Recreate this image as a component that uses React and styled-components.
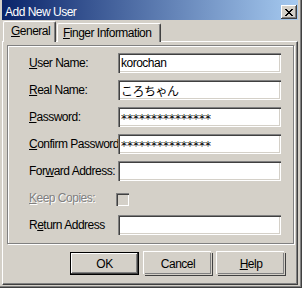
import React from 'react';
import styled, { createGlobalStyle } from 'styled-components';

// "Add New User" dialog, classic Windows look

const GlobalStyle = createGlobalStyle`
  html, body {
    margin: 0;
    padding: 0;
    background: #d4d0c8;
  }
  * {
    box-sizing: border-box;
  }
`;

const Window = styled.div`
  width: 302px;
  height: 288px;
  display: flex;
  flex-direction: column;
  padding: 0 4px 3px 2px;
  background: #d4d0c8;
  box-shadow: inset -1px -1px 0 #404040, inset -2px -2px 0 #808080;
  font-family: "Liberation Sans", Arial, "Noto Sans CJK JP", sans-serif;
  font-size: 12px;
  letter-spacing: -0.5px;
  color: #000;
`;

const TitleBar = styled.div`
  height: 20px;
  display: flex;
  align-items: center;
  justify-content: space-between;
  padding: 0 1px 0 3px;
  background: linear-gradient(to right, #0a246a, #a6caf0);
  color: #fff;
`;

const TitleText = styled.span`
  margin-top: 4px;
`;

const CloseButton = styled.div`
  width: 16px;
  height: 14px;
  align-self: flex-end;
  margin-bottom: 1px;
  display: flex;
  align-items: center;
  justify-content: center;
  background: #d4d0c8;
  box-shadow: inset -1px -1px 0 #404040, inset 1px 1px 0 #fff, inset -2px -2px 0 #808080;
`;

const TabStrip = styled.div`
  height: 21px;
  margin: 1px 0 -1px;
  padding-left: 1px;
  display: flex;
  align-items: flex-end;
`;

const Tab = styled.div`
  position: relative;
  z-index: ${p => (p.$active ? 1 : 0)};
  width: ${p => p.$width}px;
  height: ${p => (p.$active ? 21 : 19)}px;
  margin-left: ${p => p.$gap || 0}px;
  padding: 2px 0 0 ${p => p.$pad}px;
  line-height: 14px;
  white-space: nowrap;
  background: #d4d0c8;
  border-top: 1px solid #fff;
  border-left: 1px solid #fff;
  border-right: 1px solid #404040;
  border-radius: 2px 2px 0 0;
  box-shadow: inset -1px 0 0 #808080;
`;

const Panel = styled.div`
  flex: 1;
  display: flex;
  flex-direction: column;
  padding: 3px 3px 0 4px;
  border-top: 1px solid #fff;
  border-left: 1px solid #fff;
  border-right: 1px solid #404040;
  border-bottom: 1px solid #404040;
  box-shadow: inset -1px -1px 0 #808080;
`;

const GroupBox = styled.div`
  display: flex;
  flex-direction: column;
  gap: 7px;
  padding: 7px 12px 8px 21px;
  border: 1px solid #808080;
  box-shadow: inset 1px 1px 0 #fff, 1px 1px 0 #fff;
`;

const Row = styled.div`
  height: 20px;
  display: flex;
  align-items: center;
`;

const Label = styled.div`
  width: 89px;
  flex: none;
  white-space: nowrap;
  overflow: hidden;
  color: ${p => (p.$disabled ? '#808080' : '#000')};
  text-shadow: ${p => (p.$disabled ? '1px 1px 0 #fff' : 'none')};
`;

const Field = styled.input`
  width: 163px;
  height: 20px;
  flex: none;
  margin: 0;
  border: none;
  outline: none;
  padding: ${p => (p.$mask ? '4px 2px 0 3px' : '0 2px 0 3px')};
  background: #fff;
  color: #000;
  font-family: ${p => (p.$mask ? '"DejaVu Sans", sans-serif' : 'inherit')};
  font-size: 12px;
  letter-spacing: ${p => (p.$mask ? '0' : '-0.5px')};
  box-shadow: inset 1px 1px 0 #808080, inset 2px 2px 0 #404040,
    inset -1px -1px 0 #fff, inset -2px -2px 0 #d4d0c8;
`;

const CheckBox = styled.div`
  width: 13px;
  height: 13px;
  margin: 5px 0 0 -2px;
  align-self: flex-start;
  background: #d4d0c8;
  box-shadow: inset 1px 1px 0 #808080, inset 2px 2px 0 #404040,
    inset -1px -1px 0 #fff, inset -2px -2px 0 #d4d0c8;
`;

const ButtonRow = styled.div`
  display: flex;
  justify-content: flex-end;
  gap: 5px;
  margin-top: 8px;
  padding-right: 9px;
`;

const Button = styled.div`
  width: ${p => (p.$default ? 69 : 68)}px;
  height: 23px;
  display: flex;
  align-items: center;
  justify-content: center;
  background: #d4d0c8;
  border: 1px solid ${p => (p.$default ? '#000' : 'transparent')};
  box-shadow: ${p =>
    p.$default
      ? 'inset -1px -1px 0 #404040, inset 1px 1px 0 #fff, inset -2px -2px 0 #808080'
      : 'inset -1px -1px 0 #808080, 1px 1px 0 #404040, -1px -1px 0 #fff'};
`;

const CloseGlyph = () => {
  const rows = [
    'XX....XX',
    '.XX..XX.',
    '..XXXX..',
    '...XX...',
    '..XXXX..',
    '.XX..XX.',
    'XX....XX',
  ];
  return (
    <svg width="8" height="7" viewBox="0 0 8 7" shapeRendering="crispEdges">
      {rows.map((r, y) =>
        r.split('').map((c, x) =>
          c === 'X' ? <rect key={`${x}-${y}`} x={x} y={y} width="1" height="1" fill="#000" /> : null
        )
      )}
    </svg>
  );
};

const fields = [
  { label: <><u>U</u>ser Name:</>, value: 'korochan' },
  { label: <><u>R</u>eal Name:</>, value: 'ころちゃん' },
  { label: <><u>P</u>assword:</>, value: '***************', mask: true },
  { label: <><u>C</u>onfirm Password</>, value: '***************', mask: true },
  { label: <>For<u>w</u>ard Address:</>, value: '' },
];

const App = () => {
  return (
    <>
      <GlobalStyle />
      <Window>
        <TitleBar>
          <TitleText>Add New User</TitleText>
          <CloseButton>
            <CloseGlyph />
          </CloseButton>
        </TitleBar>
        <TabStrip>
          <Tab $active $width={53} $pad={7}>
            <u>G</u>eneral
          </Tab>
          <Tab $width={104} $pad={5} $gap={1}>
            <u>F</u>inger Information
          </Tab>
        </TabStrip>
        <Panel>
          <GroupBox>
            {fields.map((f, i) => (
              <Row key={i}>
                <Label>{f.label}</Label>
                <Field readOnly defaultValue={f.value} $mask={f.mask} />
              </Row>
            ))}
            <Row>
              <Label $disabled>
                <u>K</u>eep Copies:
              </Label>
              <CheckBox />
            </Row>
            <Row>
              <Label>
                R<u>e</u>turn Address
              </Label>
              <Field readOnly defaultValue="" />
            </Row>
          </GroupBox>
          <ButtonRow>
            <Button $default>OK</Button>
            <Button>Cancel</Button>
            <Button>
              <u>H</u>elp
            </Button>
          </ButtonRow>
        </Panel>
      </Window>
    </>
  );
};

export default App;
